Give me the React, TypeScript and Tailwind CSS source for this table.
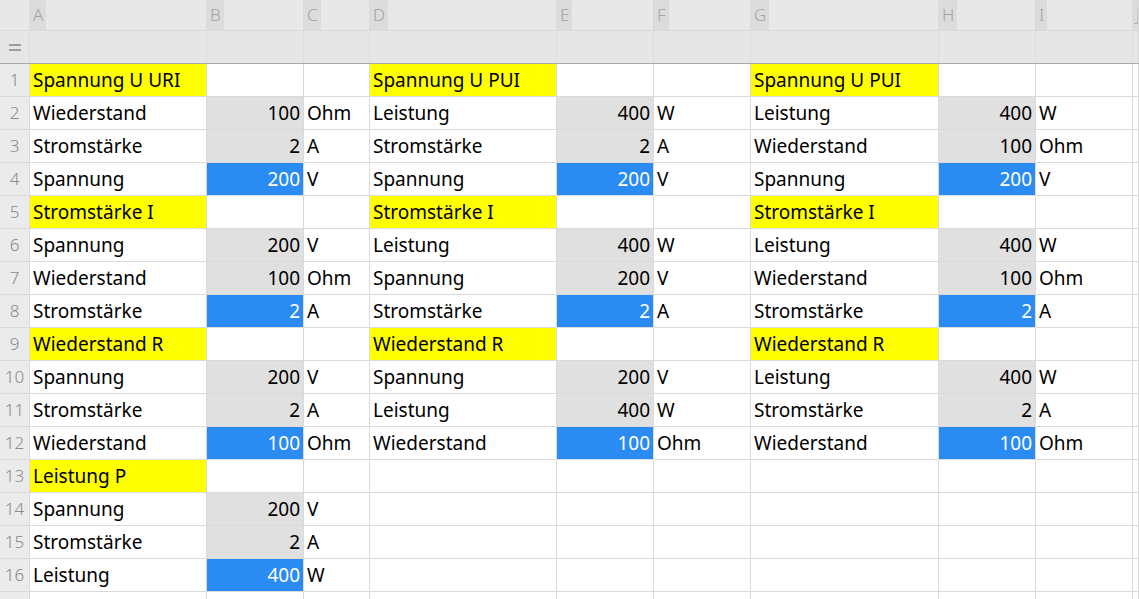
import React from "react";

type Cell = { t?: string; kind?: "y" | "g" | "b" | "u" | "l" };

const cols = ["A", "B", "C", "D", "E", "F", "G", "H", "I", "J"];

type Triple = [string, string, string] | ["Y", string] | null;

const b1: Triple[] = [
  ["Y", "Spannung U URI"],
  ["Wiederstand", "100", "Ohm"],
  ["Stromstärke", "2", "A"],
  ["Spannung", "*200", "V"],
  ["Y", "Stromstärke I"],
  ["Spannung", "200", "V"],
  ["Wiederstand", "100", "Ohm"],
  ["Stromstärke", "*2", "A"],
  ["Y", "Wiederstand R"],
  ["Spannung", "200", "V"],
  ["Stromstärke", "2", "A"],
  ["Wiederstand", "*100", "Ohm"],
  ["Y", "Leistung P"],
  ["Spannung", "200", "V"],
  ["Stromstärke", "2", "A"],
  ["Leistung", "*400", "W"],
  null,
];

const b2: Triple[] = [
  ["Y", "Spannung U PUI"],
  ["Leistung", "400", "W"],
  ["Stromstärke", "2", "A"],
  ["Spannung", "*200", "V"],
  ["Y", "Stromstärke I"],
  ["Leistung", "400", "W"],
  ["Spannung", "200", "V"],
  ["Stromstärke", "*2", "A"],
  ["Y", "Wiederstand R"],
  ["Spannung", "200", "V"],
  ["Leistung", "400", "W"],
  ["Wiederstand", "*100", "Ohm"],
  null,
  null,
  null,
  null,
  null,
];

const b3: Triple[] = [
  ["Y", "Spannung U PUI"],
  ["Leistung", "400", "W"],
  ["Wiederstand", "100", "Ohm"],
  ["Spannung", "*200", "V"],
  ["Y", "Stromstärke I"],
  ["Leistung", "400", "W"],
  ["Wiederstand", "100", "Ohm"],
  ["Stromstärke", "*2", "A"],
  ["Y", "Wiederstand R"],
  ["Leistung", "400", "W"],
  ["Stromstärke", "2", "A"],
  ["Wiederstand", "*100", "Ohm"],
  null,
  null,
  null,
  null,
  null,
];

function blockCells(t: Triple): Cell[] {
  if (!t) return [{}, {}, {}];
  if (t[0] === "Y") return [{ t: t[1], kind: "y" }, {}, {}];
  const [label, num, unit] = t as [string, string, string];
  const blue = num.startsWith("*");
  return [
    { t: label, kind: "l" },
    { t: blue ? num.slice(1) : num, kind: blue ? "b" : "g" },
    { t: unit, kind: "u" },
  ];
}

const grid =
  "grid grid-cols-[30px_177px_97px_66px_187px_97px_97px_188px_97px_97px_1fr]";

function DataCell({ c }: { c: Cell }) {
  let cls =
    "h-[33px] border-r border-b border-[#dadada] flex items-center overflow-hidden whitespace-nowrap text-[19px] text-black ";
  if (c.kind === "y") cls += "bg-[#ffff00] pl-[3px]";
  else if (c.kind === "g") cls += "bg-[#e0e0e0] justify-end pr-[3px]";
  else if (c.kind === "b") cls += "bg-[#2a8bf2] justify-end pr-[3px] text-white";
  else cls += "bg-white pl-[3px]";
  return <div className={cls}>{c.t}</div>;
}

export default function App() {
  const rows = b1.map((_, i) => [
    ...blockCells(b1[i]),
    ...blockCells(b2[i]),
    ...blockCells(b3[i]),
    {} as Cell,
  ]);
  return (
    <div
      className="w-[1139px] h-[599px] overflow-hidden bg-white select-none"
      style={{ fontFamily: "'Noto Sans', 'Open Sans', sans-serif" }}
    >
      {/* column header row */}
      <div className={`${grid} h-[31px] bg-[#e8e8e8]`}>
        <div className="border-r border-b border-[#dcdcdc]" />
        {cols.map((c) => (
          <div
            key={c}
            className="border-r border-b border-[#dadada] flex items-stretch overflow-hidden"
          >
            <span className="bg-[#dcdcdc] px-[3px] flex items-center text-[17px] font-light text-[#a3a3a3]">
              {c}
            </span>
          </div>
        ))}
      </div>
      {/* formula row */}
      <div className={`${grid} h-[33px] bg-[#e6e6e6] border-b-[1px] border-[#a9a9a9]`}>
        <div className="border-r border-[#dcdcdc] flex items-center justify-center">
          <div className="flex flex-col gap-[3px] w-[12px]">
            <div className="h-[2px] bg-[#9d9d9d]" />
            <div className="h-[2px] bg-[#9d9d9d]" />
          </div>
        </div>
        {cols.map((c) => (
          <div key={c} className="border-r border-[#dcdcdc]" />
        ))}
      </div>
      {rows.map((r, i) => (
        <div key={i} className={grid}>
          <div className="h-[33px] bg-[#ebebeb] border-r border-b border-[#dadada] flex items-center justify-center text-[17px] font-light text-[#8a8a8a]">
            {i < 16 ? i + 1 : ""}
          </div>
          {r.map((c, j) => (
            <DataCell key={j} c={c} />
          ))}
        </div>
      ))}
    </div>
  );
}
